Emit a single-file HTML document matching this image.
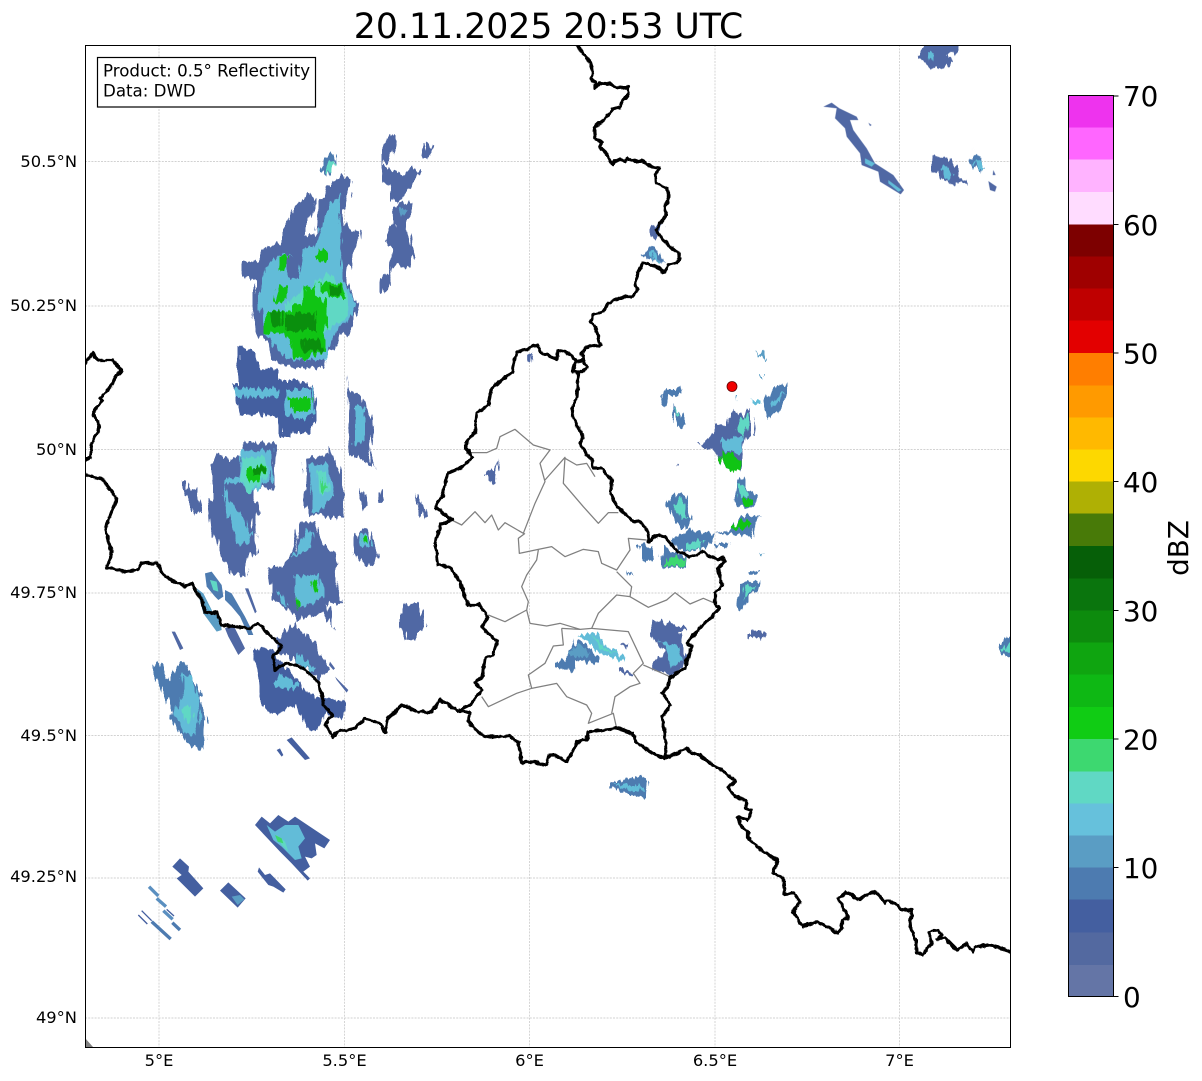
<!DOCTYPE html>
<html><head><meta charset="utf-8"><style>
html,body{margin:0;padding:0;background:#fff}
svg{display:block}
text{font-family:"DejaVu Sans","Liberation Sans",sans-serif;fill:#000}
.a{fill:#5068a4}.b{fill:#4d7bb0}.n{fill:#445fa0}.c{fill:#62bcd8}.m{fill:#5a9dc4}.d{fill:#60d8c4}.e{fill:#3dd870}.f{fill:#10c414}.g{fill:#0a8f0d}
.bd{fill:none;stroke:#000;stroke-width:3.200;stroke-linejoin:round;stroke-linecap:round}
.ds{fill:none;stroke:#808080;stroke-width:3.800;stroke-linejoin:round}
.gr{stroke:#c4c4c4;stroke-width:.7;stroke-dasharray:2 1.200;fill:none}
.s{fill:none;stroke-width:10;stroke:#4d7bb0}
</style></head><body>
<svg width="1202" height="1081" viewBox="0 0 1202 1081" xmlns="http://www.w3.org/2000/svg">
<defs>
<clipPath id="ax"><rect x="85" y="45" width="925" height="1002"/></clipPath>
<filter id="rough" filterUnits="userSpaceOnUse" x="0" y="0" width="1202" height="1081" color-interpolation-filters="sRGB">
<feTurbulence type="fractalNoise" baseFrequency="0.28 0.05" numOctaves="2" seed="4" result="t"/>
<feDisplacementMap in="SourceGraphic" in2="t" scale="11" xChannelSelector="R" yChannelSelector="G"/>
</filter>
<filter id="wig" filterUnits="userSpaceOnUse" x="0" y="0" width="1202" height="1081" color-interpolation-filters="sRGB">
<feTurbulence type="fractalNoise" baseFrequency="0.16" numOctaves="2" seed="9" result="t"/>
<feDisplacementMap in="SourceGraphic" in2="t" scale="4" xChannelSelector="R" yChannelSelector="G"/>
</filter>
</defs>
<rect width="1202" height="1081" fill="#fff"/>
<text x="548.500" y="38" font-size="34.700" text-anchor="middle">20.11.2025 20:53 UTC</text>

<g clip-path="url(#ax)">
<!-- Grid -->
<path class="gr" d="M159 45V1047M344.500 45V1047M529.500 45V1047M715 45V1047M899.500 45V1047M85 161.500H1010M85 306H1010M85 449.500H1010M85 593H1010M85 735.500H1010M85 878H1010M85 1018H1010"/>

<g filter="url(#rough)">
<!-- Radar z1 -->
<g transform="translate(85,40) scale(.33333)">
<polygon class="a" points="775,405 803,420 790,470 770,520 780,550 827,578 810,640 790,680 785,720 800,745 815,790 810,830 790,885 770,880 750,920 725,930 715,985 600,980 560,960 550,905 515,880 500,780 515,720 470,710 470,665 520,665 535,625 590,605 620,510 675,460 690,480 665,560 660,590 700,580 700,520 730,440"/>
<polygon class="c" points="745,480 770,470 760,550 775,570 770,620 770,710 800,760 810,790 800,830 770,850 740,900 720,960 640,960 600,955 560,900 540,880 525,820 520,770 540,680 590,640 640,650 640,720 650,640 700,600 710,550"/>
<polygon class="a" points="605,650 650,640 640,720 610,710"/>
<polygon class="a" points="700,480 725,470 715,560 695,570"/>
<polygon class="d" points="600,790 730,700 790,760 790,830 720,880 600,880"/>
<polygon class="f" points="585,645 610,645 610,660 595,690 580,690"/>
<polygon class="f" points="705,620 730,640 730,660 710,670 690,650"/>
<polygon class="f" points="580,740 605,740 605,765 590,790 565,785 570,765"/>
<polygon class="f" points="660,740 690,735 695,770 720,780 730,830 720,880 720,930 660,960 625,950 620,900 590,880 540,880 540,810 580,810 605,820 620,795 650,795"/>
<polygon class="f" points="705,725 770,730 785,775 745,770 705,750"/>
<polygon class="g" points="600,820 690,820 695,870 600,870"/>
<polygon class="g" points="555,810 590,815 590,860 560,860"/>
<polygon class="g" points="735,735 765,735 765,765 735,765"/>
<polygon class="g" points="650,900 700,895 710,935 650,935"/>
<polygon class="b" points="735,332 748,340 750,365 730,405 705,395 715,355"/>
<polygon class="d" points="735,365 750,370 735,400 725,395"/>
<polygon class="a" points="915,282 935,290 925,330 915,360 890,375 935,395 955,405 985,380 1005,395 985,430 940,488 915,475 915,440 885,410 890,330"/>
<polygon class="a" points="1020,310 1045,320 1028,355 1012,350"/>
<polygon class="a" points="950,485 978,490 975,530 960,550 990,645 975,690 945,670 925,680 915,740 895,765 885,750 890,715 915,700 920,630 900,605 925,550 925,510"/>
<polygon class="m" points="945,505 965,505 955,525"/>
</g>

<!-- Radar page coords -->
<polygon class="n" points="237,348 252,348 258,367 278,370 278,380 297,380 310,385 315,395 316,405 315,420 310,433 298,433 292,430 290,437 280,437 277,416 255,414 240,416 236,400 234,385 238,385"/>
<polygon class="c" points="234,390 280,388 280,397 236,398"/>
<polygon class="c" points="284,390 312,390 314,412 300,420 286,414"/>
<polygon class="f" points="288,398 312,398 310,410 292,412"/>
<polygon class="a" points="346,378 348,390 362,395 372,420 370,445 374,470 368,462 350,455 347,430 348,400"/>
<polygon class="c" points="355,407 365,407 365,440 355,445"/>
<polygon class="b" points="611,783 640,776 648,780 646,798 625,793 611,788"/>
<polygon class="c" points="613,784 640,784 645,790 625,789"/>
<polygon class="b" points="997,648 1014,630 1014,658 1005,655"/>
<polygon class="d" points="1001,648 1014,640 1014,652"/>

<!-- Radar z2 -->
<g transform="translate(85,400) scale(.33333)">
<polygon class="a" points="475,125 575,130 565,270 535,265 500,270 525,345 510,340 505,380 520,460 490,470 480,530 435,520 400,450 395,420 380,390 370,310 385,290 378,195 400,165 440,180 475,160"/>
<polygon class="c" points="465,155 560,150 560,240 500,280 470,250 420,250 430,300 470,340 500,400 490,430 460,430 440,380 415,290 420,240 460,230"/>
<polygon class="d" points="470,175 540,170 550,230 490,280 465,240"/>
<polygon class="f" points="490,205 540,195 540,220 505,250 480,230"/>
<polygon class="g" points="510,200 540,200 540,220 510,222"/>
<polygon class="a" points="290,240 305,240 310,265 335,270 350,340 330,345 300,280"/>
<polygon class="a" points="660,175 735,165 740,140 780,290 775,350 745,355 695,345 670,350 655,300 665,260"/>
<polygon class="c" points="670,195 730,190 745,285 700,340 680,340 680,260"/>
<polygon class="d" points="700,210 725,215 725,280 700,280"/>
<polygon class="e" points="708,225 722,270 712,275"/>
<polygon class="a" points="825,265 855,320 835,325 822,295"/>
<polygon class="a" points="880,275 887,272 898,310 880,310"/>
<polygon class="a" points="995,280 1028,350 1015,355 990,295"/>
<polygon class="a" points="825,375 855,395 880,470 870,490 845,500 805,460 810,405"/>
<polygon class="c" points="820,390 855,410 860,440 825,445"/>
<polygon class="f" points="830,410 845,410 850,430 835,435"/>
<polygon class="a" points="645,365 690,365 710,425 755,465 760,495 745,515 775,610 730,610 745,685 710,640 640,660 610,630 565,600 548,510 600,490 625,450 640,380"/>
<polygon class="c" points="670,385 685,395 680,430 680,450 620,470 640,440"/>
<polygon class="c" points="630,530 705,525 715,590 645,630 630,600"/>
<polygon class="c" points="575,560 610,620 590,610"/>
<polygon class="f" points="680,545 695,535 700,570 690,580"/>
<polygon class="f" points="635,590 650,620 640,630 630,600"/>
<polygon class="a" points="600,700 630,670 690,730 735,810 700,840 640,790 590,760 570,720"/>
<polygon class="n" points="500,745 555,745 590,790 630,830 660,870 700,890 785,905 770,960 725,940 695,995 670,990 630,920 575,940 555,940 525,900 520,830"/>
<polygon class="c" points="580,820 640,850 610,870 570,860"/>
<polygon class="c" points="640,760 690,810 680,820 630,780"/>
<polygon class="b" points="200,795 220,785 250,840 285,785 300,790 350,890 345,895 365,965 360,1000 365,1045 350,1055 310,1030 255,955 265,930 225,860"/>
<polygon class="c" points="285,825 320,825 340,900 345,960 330,1010 300,1000 265,940 290,900 300,870"/>
<polygon class="d" points="290,930 320,910 320,960 310,970"/>
<polygon class="a" points="955,610 1000,610 1022,680 985,720 965,720 945,680 945,645"/>
</g>

<!-- Radar z3 -->
<g transform="translate(420,330) scale(.33333)">
<polygon class="a" points="320,70 338,70 335,95 320,95"/>
<polygon class="a" points="237,390 232,425 225,460 205,450 195,430 225,415"/>
<polygon class="a" points="0,510 22,562 10,568 0,540"/>
<polygon class="a" points="0,845 15,890 5,897 0,885"/>
<polygon class="b" points="720,195 745,175 775,170 780,195 745,195 745,230 730,230"/>
<polygon class="b" points="760,220 780,250 800,290 775,292 760,250"/>
<polygon class="d" points="765,235 775,240 778,260 768,255"/>
<polygon class="a" points="835,340 865,325 885,290 920,285 935,240 960,260 990,235 1000,315 975,325 960,425 905,400 880,365"/>
<polygon class="c" points="900,330 970,320 965,370 900,360"/>
<polygon class="d" points="950,300 975,250 985,275 970,320"/>
<polygon class="f" points="900,365 935,370 960,395 955,425 900,395"/>
<polygon class="b" points="950,445 975,450 980,480 1012,495 1010,515 985,540 960,525 940,515 950,490"/>
<polygon class="d" points="955,460 975,470 985,500 960,505"/>
<polygon class="f" points="965,505 1000,510 990,535 970,525"/>
<polygon class="b" points="738,520 770,488 800,505 818,570 800,598 770,580"/>
<polygon class="d" points="760,525 785,505 805,560 785,570"/>
<polygon class="b" points="885,610 930,605 960,560 1015,555 1000,620 930,615"/>
<polygon class="f" points="930,600 960,570 1000,575 975,600"/>
<polygon class="b" points="885,640 930,640 920,655 895,652"/>
<polygon class="b" points="750,630 810,600 880,610 870,640 840,665 780,665"/>
<polygon class="d" points="800,640 850,630 845,660 805,662"/>
<polygon class="b" points="650,640 700,650 705,690 670,695"/>
<polygon class="b" points="725,650 760,665 805,685 800,712 725,710"/>
<polygon class="e" points="750,680 800,690 795,708 735,705"/>
<polygon class="m" points="1015,670 1030,672 1020,678"/>
<polygon class="b" points="960,760 1020,750 1015,775 990,790 970,840 950,830"/>
<polygon class="d" points="975,770 1005,770 985,790 970,810"/>
<polygon class="b" points="990,725 1020,725 1010,735 995,735"/>
<polygon class="a" points="990,900 1040,905 1025,930 990,920"/>
<polygon class="a" points="692,868 805,895 780,910 800,990 770,1035 695,1020 695,1000 735,970 695,920"/>
<polygon class="c" points="720,935 775,950 790,990 750,1010 745,970"/>
<polygon class="b" points="470,925 540,980 530,1000 470,990 465,1025 405,1010 405,995 435,990"/>
<polygon class="m" points="465,945 510,970 480,985 445,975"/>
<polygon class="c" points="475,915 520,905 565,950 620,985 610,995 555,975"/>
<polygon class="d" points="515,915 555,950 590,975 545,955"/>
<polygon class="a" points="595,1010 640,1030 635,1035 595,1025"/>
<polygon class="a" points="600,940 625,938 620,955"/>
<polygon class="m" points="1010,75 1025,65 1040,90 1020,80"/>
<polygon class="b" points="1030,210 1060,175 1100,160 1105,185 1080,240 1040,270"/>
<polygon class="c" points="1050,225 1085,190 1095,190 1055,240"/>
<polygon class="c" points="995,210 1020,210 1020,225 1000,225"/>
<polygon class="b" points="620,715 638,735 630,735"/>
<polygon class="m" points="945,195 950,195 948,215"/>
<rect class="a" x="765" y="403" width="6" height="4"/>
<rect class="m" x="1020" y="135" width="12" height="6"/>
</g>

<!-- Radar z4 -->
<g transform="translate(560,40) scale(.33333)">
<polygon class="a" points="1095,5 1205,5 1195,40 1160,40 1180,65 1135,90 1090,65 1072,45"/>
<polygon class="c" points="1100,35 1120,35 1115,60 1100,55"/>
<polygon class="a" points="1120,345 1165,355 1195,390 1195,410 1220,430 1215,437 1190,425 1190,440 1150,420 1120,390"/>
<polygon class="c" points="1135,385 1165,380 1180,400 1165,425"/>
<polygon class="b" points="1235,325 1260,350 1270,385 1260,397 1225,365 1250,340"/>
<polygon class="c" points="1240,365 1260,360 1270,385 1260,395"/>
<polygon class="a" points="262,570 275,555 310,555 290,595 275,590"/>
<polygon class="b" points="240,645 270,620 290,630 315,668 275,660"/>
<polygon class="c" points="265,635 285,640 300,665 280,660"/>
</g>
</g>

<!-- Thin / diagonal echoes kept unfiltered -->
<g transform="translate(85,400) scale(.33333)">
<polygon class="b" points="360,520 380,515 410,555 415,590 400,600 390,590 365,560"/>
<polygon class="d" points="375,540 395,545 400,575 385,570"/>
<polygon class="m" points="335,565 355,580 375,620 385,640 405,650 410,690 395,695 355,640"/>
<polygon class="c" points="360,605 375,625 385,650 370,625"/>
<polygon class="b" points="420,570 440,580 480,650 495,680 505,705 490,705 465,650 440,620 420,600"/>
<polygon class="a" points="480,565 490,565 515,635 510,640"/>
<polygon class="a" points="420,685 445,675 480,745 460,765 430,710"/>
<polygon class="a" points="260,695 270,695 295,745 285,750"/>
<polygon class="a" points="750,830 790,870 785,878 755,840"/>
<polygon class="a" points="735,785 750,805 745,810 732,795"/>
<polygon class="n" points="605,1020 620,1012 675,1075 660,1080"/>
<polygon class="n" points="575,1050 585,1045 595,1065 590,1070"/>
</g>
<g transform="translate(560,40) scale(.33333)">
<polygon class="a" points="790,200 815,188 838,205 890,230 895,240 870,240 880,270 920,325 945,370 1000,405 1032,450 1022,463 960,425 955,395 905,375 900,340 860,290 855,265 825,235 830,205"/>
<polygon class="c" points="915,355 945,370 935,380 915,370"/>
<polygon class="c" points="985,420 1025,450 1015,455 985,430"/>
<polygon class="a" points="1300,390 1307,405 1298,405"/>
<polygon class="a" points="1285,423 1310,440 1305,455 1290,450"/>
<polygon class="a" points="925,248 935,255 930,258"/>
</g>
<g transform="translate(85,760) scale(.33333)">
<polygon class="n" points="530,170 555,190 580,165 610,185 630,170 690,210 735,240 718,265 690,250 695,285 680,295 660,290 675,320 655,335 675,355 668,362 620,310 585,275 510,195"/>
<polygon class="c" points="545,195 570,215 600,195 640,195 660,235 640,260 650,295 630,300 590,260 565,240"/>
<polygon class="d" points="575,225 600,245 610,275 590,255"/>
<polygon class="e" points="570,225 590,235 595,250 578,245"/>
<polygon class="n" points="285,295 312,320 310,335 355,385 330,410 275,355 290,345 262,320"/>
<polygon class="n" points="430,367 482,415 458,443 405,392"/>
<polygon class="m" points="440,410 465,405 478,418 458,435"/>
<polygon class="n" points="522,322 540,345 555,340 602,388 595,398 565,380 550,375 518,335"/>
<path class="s" style="stroke:#5a8fc0" d="M192 380L220 408M215 415L243 440M235 452L263 478"/>
<path class="s" d="M262 488L285 510M200 485L257 537"/>
<path class="s" style="stroke-width:4;stroke:#445fa0" d="M160 465L187 492M170 452L200 482M245 448L267 468"/>
</g>
<polygon points="85,1038 93,1047 85,1047" fill="#808080"/>

<!-- District lines -->
<g transform="translate(420,330) scale(.33333)">
<path class="ds" d="M95 570L125 585L165 545L195 578L215 555L235 600L255 578L310 610L345 520L375 455L360 400L390 360L340 345L285 298L240 320L230 355L200 368L150 368"/>
<path class="ds" d="M375 450L435 382L430 460L490 530L535 580L565 548L595 548"/>
<path class="ds" d="M435 385L470 405L500 400L525 440"/>
<path class="ds" d="M315 610L295 625L298 670L355 658L395 650L435 680L490 658L535 665L545 700L590 720L630 660L625 625L680 630"/>
<path class="ds" d="M355 660L350 690L320 735L305 770L325 815L320 840L255 875L205 855"/>
<path class="ds" d="M320 840L330 880L380 888L420 880L480 898L515 895L535 850L590 795L630 800L685 832L740 810L765 788L810 822L850 805L885 820"/>
<path class="ds" d="M590 725L635 770L630 800"/>
<path class="ds" d="M425 895L430 945L400 948L375 1000L325 1035L335 1075L410 1060L440 1100L500 1125L515 1150L505 1180L580 1150L590 1195"/>
<path class="ds" d="M425 895L480 898M515 895L625 905L670 1000L640 1030L660 1060L630 1070L585 1100L575 1150"/>
<path class="ds" d="M670 1005L750 1040"/>
<path class="ds" d="M185 1100L205 1130L290 1090L335 1075"/>
</g>

<!-- Country borders -->
<g filter="url(#wig)">
<path class="bd" d="M578 46L583 53L590 63L593 73L591 78L595 83L595 88L600 83L610 84L618 88L628 87L628 93L622 102L620 107L613 109L605 118L594 128L595 138L602 142L599 147L605 152L612 164L620 159L625 162L628 158L635 162L643 161L652 167L659 168L655 175L656 183L667 188L669 197L665 208L666 215L656 230L663 240L677 252L680 258L677 263L668 265L663 273L662 270L652 265L643 263L638 273L635 282L637 290L632 297L623 297L608 303L603 312L593 315L591 322L595 327L598 335L600 345L585 348L582 353L583 360L587 367L583 372L573 372L575 363L583 360M578 372L578 380L577 397L573 407L572 415L578 427L583 438L580 443L587 455L592 460L593 468L600 468L612 480L610 493L617 507L632 520L640 522L647 530L649 542L657 535L665 537L678 552L690 557L703 552L717 560L723 557L725 562L718 568L722 587L715 592L715 605L720 608L715 613L713 617L702 625L687 643L692 645L685 668L670 678L668 687L662 693L670 705L662 718L665 733L666 757"/>
<path class="bd" d="M577 362L568 353L558 350L557 359L542 353L538 345L517 352L512 372L492 388L488 405L477 413L475 432L465 445L472 458L462 467L448 473L442 497L435 507L452 520L440 525L435 543L438 565L450 567L460 582L468 605L480 605L488 617L482 627L497 642L493 655L485 658L482 677L475 683L482 690L470 705L460 710L470 713L468 722L482 735L490 737L510 736L518 742L522 762L535 762L545 765L550 755L555 755L567 762L577 742L587 740L588 732L617 728L632 733L637 743L652 753L665 758L678 753L686 748L692 753L700 755L710 763L725 772L735 781L728 787L735 797L746 800L746 808L752 810L748 820L738 817L740 825L748 832L748 837L757 847L777 860L773 873L783 878L785 895L795 893L800 902L793 912L802 926L818 922L838 933L842 928L842 920L848 918L843 907L838 898L847 892L859 900L872 892L877 893L885 903L889 900L903 910L912 910L910 927L916 940L917 952L922 955L932 943L929 932L938 930L942 935L937 940L945 938L957 950L967 944L973 952L975 947L988 945L1003 949L1010 952"/>
<path class="bd" d="M85 475L102 479L117 498L105 528L112 553L106 568L112 568L125 572L138 570L142 563L157 563L165 577L185 586L192 584L202 600L205 612L212 613L217 612L222 625L238 627L250 628L258 623L282 647L273 655L275 670L285 663L302 668L317 680L323 697L323 705L332 715L325 725L333 737L338 732L355 728L365 719L380 723L385 732L388 718L402 705L418 712L432 712L440 700L460 712"/>
<path class="bd" d="M85 363L93 353L98 360L113 360L121 370L110 387L100 398L102 400L93 413L100 427L92 442L90 457L85 460"/>
</g>

<circle cx="732" cy="386.500" r="5" fill="#f00000" stroke="#600" stroke-width=".8"/>
</g>

<!-- Axes frame -->
<rect x="85.500" y="45.500" width="925" height="1002" fill="none" stroke="#000" stroke-width="1"/>

<!-- Legend box -->
<rect x="97.500" y="57.500" width="218" height="49.500" fill="#fff" stroke="#000" stroke-width="1.200"/>
<text x="103" y="76.500" font-size="16.650">Product: 0.5° Reflectivity</text>
<text x="103" y="96.500" font-size="16.650">Data: DWD</text>

<!-- Y labels -->
<g font-size="16.300" text-anchor="end">
<text x="77" y="167">50.5°N</text>
<text x="77" y="311">50.25°N</text>
<text x="77" y="455">50°N</text>
<text x="77" y="598">49.75°N</text>
<text x="77" y="741">49.5°N</text>
<text x="77" y="882">49.25°N</text>
<text x="77" y="1023">49°N</text>
</g>
<g font-size="16.300" text-anchor="middle">
<text x="159" y="1066">5°E</text>
<text x="344.500" y="1066">5.5°E</text>
<text x="529.500" y="1066">6°E</text>
<text x="715" y="1066">6.5°E</text>
<text x="899.500" y="1066">7°E</text>
</g>

<!-- Colorbar -->
<g shape-rendering="crispEdges">
<rect x="1068" y="964.500" width="45" height="32.500" fill="#6475a6"/>
<rect x="1068" y="932.300" width="45" height="32.500" fill="#5369a0"/>
<rect x="1068" y="899" width="45" height="33.500" fill="#445fa0"/>
<rect x="1068" y="867" width="45" height="32.500" fill="#4d7bb0"/>
<rect x="1068" y="835" width="45" height="32.500" fill="#5a9dc4"/>
<rect x="1068" y="803" width="45" height="32.500" fill="#66c1dc"/>
<rect x="1068" y="771" width="45" height="32.500" fill="#60d8c4"/>
<rect x="1068" y="739" width="45" height="32.500" fill="#3dd870"/>
<rect x="1068" y="706.500" width="45" height="32.500" fill="#10cc14"/>
<rect x="1068" y="674" width="45" height="33" fill="#0eb814"/>
<rect x="1068" y="642" width="45" height="32.500" fill="#0fa510"/>
<rect x="1068" y="610" width="45" height="32.500" fill="#0d8b0d"/>
<rect x="1068" y="578" width="45" height="32.500" fill="#0a750d"/>
<rect x="1068" y="546" width="45" height="32.500" fill="#065f08"/>
<rect x="1068" y="513" width="45" height="33" fill="#487a08"/>
<rect x="1068" y="481" width="45" height="32.500" fill="#afb004"/>
<rect x="1068" y="449" width="45" height="32.500" fill="#fdd800"/>
<rect x="1068" y="417" width="45" height="32.500" fill="#ffb900"/>
<rect x="1068" y="385" width="45" height="32.500" fill="#ff9a00"/>
<rect x="1068" y="353" width="45" height="32.500" fill="#ff7e00"/>
<rect x="1068" y="320" width="45" height="33" fill="#e30000"/>
<rect x="1068" y="288" width="45" height="32.500" fill="#bf0000"/>
<rect x="1068" y="256" width="45" height="32.500" fill="#9f0000"/>
<rect x="1068" y="224" width="45" height="32.500" fill="#7d0000"/>
<rect x="1068" y="192" width="45" height="32.500" fill="#ffdcff"/>
<rect x="1068" y="159" width="45" height="33" fill="#ffb3ff"/>
<rect x="1068" y="127" width="45" height="32.500" fill="#ff66ff"/>
<rect x="1068" y="95.500" width="45" height="32" fill="#ee33ee"/>
</g>
<rect x="1068.500" y="95.500" width="45" height="901" fill="none" stroke="#000" stroke-width="1"/>
<path d="M1113 96H1118.500M1113 224.500H1118.500M1113 353H1118.500M1113 481.500H1118.500M1113 610.500H1118.500M1113 739H1118.500M1113 867.500H1118.500M1113 996.500H1118.500" stroke="#000" stroke-width="1" fill="none"/>
<g font-size="27.800">
<text x="1123" y="106">70</text>
<text x="1123" y="235">60</text>
<text x="1123" y="363.500">50</text>
<text x="1123" y="492">40</text>
<text x="1123" y="621">30</text>
<text x="1123" y="749.500">20</text>
<text x="1123" y="878">10</text>
<text x="1123" y="1007">0</text>
</g>
<text transform="translate(1188,548) rotate(-90)" font-size="27.800" text-anchor="middle">dBZ</text>
</svg>
</body></html>
